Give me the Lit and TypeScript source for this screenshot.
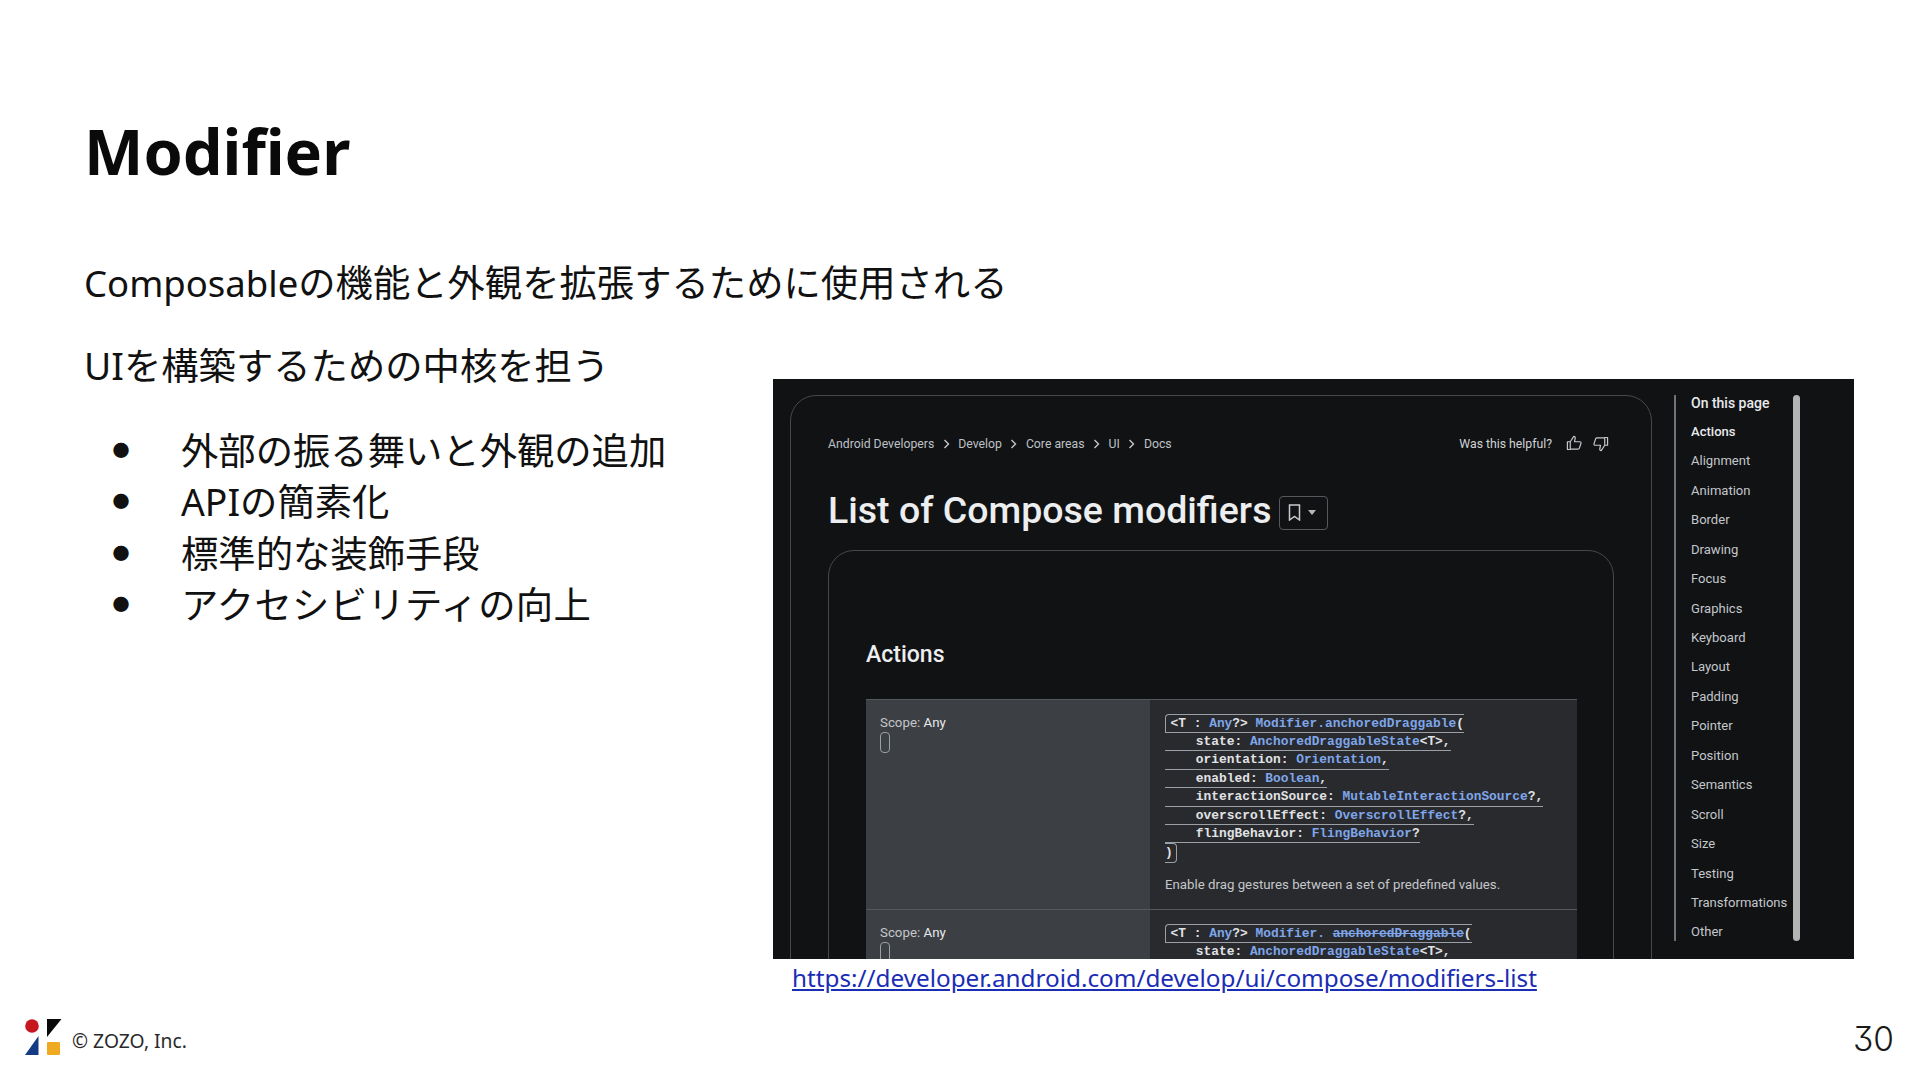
import { LitElement, html, css, svg } from "lit";
import { customElement } from "lit/decorators.js";

const TOC = ["Actions","Alignment","Animation","Border","Drawing","Focus","Graphics","Keyboard","Layout","Padding","Pointer","Position","Semantics","Scroll","Size","Testing","Transformations","Other"];
const BULLETS = ["外部の振る舞いと外観の追加","APIの簡素化","標準的な装飾手段","アクセシビリティの向上"];
const CRUMBS = ["Android Developers","Develop","Core areas","UI","Docs"];

const thumb = svg`<path d="M2 9.5h4v11H2z M6 9.5l5-7.500c1.500 0 2.300 1 2 2.500l-1 5h7.500c1.200 0 2 1 1.600 2.300l-2.200 6.800c-.3 1-1 1.400-2 1.400H6" fill="none" stroke="currentColor" stroke-width="1.700" stroke-linejoin="round"/>`;

@customElement("app-root")
export class AppRoot extends LitElement {
  static styles = css`
    :host { display: block; }
    * { box-sizing: border-box; }
    .page { position: relative; width: 1920px; height: 1080px; background: #fff; overflow: hidden; display: flex; flex-direction: column; font-family: "Noto Sans", "Noto Sans CJK JP", sans-serif; color: #111; padding-top: 110.500px; }
    h1 { margin: 0 0 67px 84px; font-size: 63px; line-height: 80px; font-weight: 700; color: #0a0a0a; }
    .body { display: flex; padding-left: 84px; height: 760px; }
    .text { width: 689px; flex: none; white-space: nowrap; font-size: 37.330px; line-height: 50px; }
    .text p { margin: 0 0 33.500px; }
    .lat { font-size: 36.500px; }
    ul { margin: 0; padding: 0; list-style: none; }
    li { display: flex; line-height: 51.600px; height: 51.600px; }
    li:last-child span:last-child { letter-spacing: .33px; }
    .dot { width: 97px; padding-left: 28.500px; font-size: 17px; flex: none; }
    .figure { flex: none; width: 1081px; margin-top: 121px; }
    .shot { height: 580.500px; background: #111214; overflow: hidden; display: flex; padding: 16px 0 0 17px; font-family: Roboto, "Liberation Sans", sans-serif; color: #bdc1c6; }
    .link { display: block; margin: 1px 0 0 19px; font-size: 24.280px; line-height: 36px; color: #1a2db5; text-decoration: underline; }
    .card { width: 862px; flex: none; height: 800px; border: 1.500px solid #46484b; border-radius: 26px; padding: 0 37px; }
    .crumbs { display: flex; align-items: center; height: 20px; margin-top: 38px; font-size: 12.250px; justify-content: space-between; margin-right: 5px; }
    .trail, .help { display: flex; align-items: center; }
    .trail svg { width: 7px; height: 10px; margin: 0 8.500px; color: #c4c7cb; }
    .help { color: #d0d3d6; }
    .help svg { width: 17px; height: 17px; margin-left: 13px; color: #c4c7cb; }
    .help svg.first { margin-left: 14px; }
    .help svg.down { transform: rotate(180deg); margin-left: 9px; }
    .headline { display: flex; align-items: center; margin-top: 36px; height: 40px; }
    .headline h2 { margin: 0; font-size: 37.500px; font-weight: 500; color: #eceef0; line-height: 40px; white-space: nowrap; }
    .bm { margin: 6px 0 0 8px; width: 49px; height: 34px; border: 1.500px solid #55585c; border-radius: 4px; display: flex; align-items: center; padding-left: 8px; gap: 7px; }
    .bm .icon { width: 13px; height: 17px; color: #c8cbce; }
    .bm .caret { width: 8px; height: 5px; color: #b6b9bc; }
    .inner { margin-top: 20.500px; width: 786px; height: 700px; border: 1.500px solid #46484b; border-radius: 26px; padding: 0 37px; }
    .inner h3 { margin: 91px 0 31px; font-size: 23px; line-height: 26px; font-weight: 500; color: #eceef0; }
    .table { width: 711px; border-top: 1.500px solid #55585c; }
    .row { display: flex; height: 210px; border-bottom: 1.500px solid #55585c; }
    .row:last-child { border-bottom: 0; }
    .scope { width: 284px; flex: none; background: #3c3f43; padding: 13.500px 14px; font-size: 13.300px; line-height: 18px; color: #c4c7cb; }
    .scope b { font-weight: 400; color: #e8eaed; }
    .pill { width: 10px; height: 21px; margin-top: 0; border: 1.500px solid #9aa0a6; border-radius: 4px; }
    .def { flex: 1; background: #292a2d; padding: 14px 15px; }
    .ln { width: fit-content; height: 18.400px; font: 700 12.870px/17px "Liberation Mono", monospace; white-space: pre; color: #e0e2e5; border-bottom: 1.200px solid #9aa0a6; }
    .ln.open { height: 19px; padding-left: 4.600px; border-top: 1.200px solid #9aa0a6; border-left: 1.200px solid #9aa0a6; border-top-left-radius: 4px; }
    .ln.close { height: 20px; width: 12px; border: 1.200px solid #9aa0a6; border-left: 0; border-top-right-radius: 4px; border-bottom-right-radius: 4px; border-bottom-left-radius: 0; }
    .ln i { font-style: normal; color: #7fa6ea; }
    .ln .gone { text-decoration: line-through; }
    .desc { margin: 12px 0 0; font-size: 13.250px; line-height: 20px; color: #c4c7cb; }
    .toc { margin-left: 22px; width: 118px; height: 546px; flex: none; border-left: 2px solid #70747a; padding-left: 15px; display: flex; flex-direction: column; gap: 13.450px; font-size: 13.050px; line-height: 16px; color: #c4c7cb; white-space: nowrap; }
    .toc .on { font-weight: 500; color: #e8eaed; }
    .toc .head { font-size: 14px; }
    .bar { width: 7px; height: 546px; margin-left: 1px; flex: none; background: #b4b4b4; border-radius: 4px; }
    footer { position: absolute; top: 1019px; left: 25px; width: 1869px; display: flex; align-items: flex-start; }
    .logo { width: 37px; height: 37px; flex: none; }
    .co { margin: 9px 0 0 10px; font-size: 19.300px; line-height: 26px; color: #2a2a2a; }
    .num { margin-left: auto; font-family: Inter, "Noto Sans", sans-serif; font-feature-settings: "cv09"; font-size: 33.500px; line-height: 40px; font-weight: 300; color: #1a1a1a; }
  `;

  renderRow(first: boolean) {
    return html`<div class="row">
      <div class="scope">Scope: <b>Any</b><div class="pill"></div></div>
      <div class="def">
        ${first
          ? html`<div class="ln open">&lt;T : <i>Any</i>?&gt; <i>Modifier.anchoredDraggable</i>(</div>`
          : html`<div class="ln open">&lt;T : <i>Any</i>?&gt; <i>Modifier. <span class="gone">anchoredDraggable</span></i>(</div>`}
        <div class="ln">    state: <i>AnchoredDraggableState</i>&lt;T&gt;,</div>
        <div class="ln">    orientation: <i>Orientation</i>,</div>
        <div class="ln">    enabled: <i>Boolean</i>,</div>
        <div class="ln">    interactionSource: <i>MutableInteractionSource</i>?,</div>
        <div class="ln">    overscrollEffect: <i>OverscrollEffect</i>?,</div>
        <div class="ln">    flingBehavior: <i>FlingBehavior</i>?</div>
        <div class="ln close">)</div>
        <p class="desc">Enable drag gestures between a set of predefined values.</p>
      </div>
    </div>`;
  }

  render() {
    return html`<div class="page">
      <h1>Modifier</h1>
      <div class="body">
        <div class="text">
          <p><span class="lat">Composable</span>の機能と外観を拡張するために使用される</p>
          <p>UIを構築するための中核を担う</p>
          <ul>${BULLETS.map((b) => html`<li><span class="dot">●</span><span>${b}</span></li>`)}</ul>
        </div>
        <div class="figure">
          <div class="shot">
            <div class="card">
              <div class="crumbs">
                <div class="trail">${CRUMBS.map((c, i) => html`${i ? html`<svg viewBox="0 0 7 10"><path d="M1.500 1l4 4-4 4" fill="none" stroke="currentColor" stroke-width="1.400"/></svg>` : ""}<span>${c}</span>`)}</div>
                <div class="help">Was this helpful?
                  <svg class="first" viewBox="0 0 24 24">${thumb}</svg>
                  <svg class="down" viewBox="0 0 24 24">${thumb}</svg>
                </div>
              </div>
              <div class="headline">
                <h2>List of Compose modifiers</h2>
                <div class="bm">
                  <svg class="icon" viewBox="0 0 13 17"><path d="M1.500 1h10v15l-5-3.500-5 3.500z" fill="none" stroke="currentColor" stroke-width="1.500"/></svg>
                  <svg class="caret" viewBox="0 0 8 5"><path d="M0 0h8L4 5z" fill="currentColor"/></svg>
                </div>
              </div>
              <div class="inner">
                <h3>Actions</h3>
                <div class="table">${this.renderRow(true)}${this.renderRow(false)}</div>
              </div>
            </div>
            <nav class="toc">
              <span class="on head">On this page</span>
              ${TOC.map((t, i) => html`<span class="${i === 0 ? "on" : ""}">${t}</span>`)}
            </nav>
            <div class="bar"></div>
          </div>
          <a class="link" href="#">https://developer.android.com/develop/ui/compose/modifiers-list</a>
        </div>
      </div>
      <footer>
        <svg class="logo" viewBox="0 0 37 37">
          <circle cx="7" cy="7" r="6.800" fill="#c8161d"/>
          <path d="M22 0h14.500L22 18z" fill="#0a0a0a"/>
          <path d="M13.500 17v19H0z" fill="#143a84"/>
          <rect x="22" y="23" width="13" height="13" rx="1" fill="#f0aa22"/>
        </svg>
        <span class="co">© ZOZO, Inc.</span>
        <span class="num">30</span>
      </footer>
    </div>`;
  }
}
